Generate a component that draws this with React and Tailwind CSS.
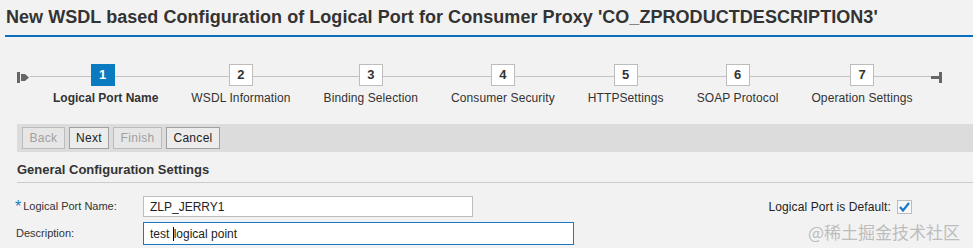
import React from 'react'

const steps = [
  { n: 1, label: 'Logical Port Name', active: true },
  { n: 2, label: 'WSDL Information' },
  { n: 3, label: 'Binding Selection' },
  { n: 4, label: 'Consumer Security' },
  { n: 5, label: 'HTTPSettings' },
  { n: 6, label: 'SOAP Protocol' },
  { n: 7, label: 'Operation Settings' },
]

function Step({ n, label, active }) {
  return (
    <div className="flex flex-col items-center">
      <div
        className={
          active
            ? 'w-[24px] h-[22px] mr-[6px] flex items-center justify-center bg-[#0a7bc1] border border-[#0a7bc1] text-white text-[13px] font-bold'
            : 'w-[24px] h-[22px] flex items-center justify-center bg-white border border-[#bdbdbd] text-[#333] text-[13px] font-bold'
        }
      >
        {n}
      </div>
      <div className={active ? 'mt-[5px] text-[12px] leading-[14px] font-bold text-[#333] whitespace-nowrap' : 'mt-[5px] text-[12px] leading-[14px] tracking-[0.1px] text-[#333] whitespace-nowrap'}>
        {label}
      </div>
    </div>
  )
}

function Btn({ children, disabled, w }) {
  return (
    <button
      className={
        (disabled
          ? 'h-[22px] border border-[#bcbcbc] bg-[#e6e6e6] text-[#a0a0a0] text-[12px] tracking-[0.3px] '
          : 'h-[22px] border border-[#a0a0a0] bg-[#ececec] text-[#222] text-[12px] tracking-[0.3px] ') + w
      }
    >
      {children}
    </button>
  )
}

export default function App() {
  return (
    <div className="relative w-[973px] h-[248px] overflow-hidden bg-[#f2f2f2] text-[#333] font-['Liberation_Sans',Arial,sans-serif]">
      {/* Title */}
      <div className="ml-[5px] h-[37px] border-b-2 border-[#0a6ebd] pl-[1px] pt-[6px]">
        <h1 className="text-[18px] leading-[22px] tracking-[0.05px] font-bold text-[#333] whitespace-nowrap">
          New WSDL based Configuration of Logical Port for Consumer Proxy 'CO_ZPRODUCTDESCRIPTION3'
        </h1>
      </div>

      {/* Roadmap */}
      <div className="relative h-[87px]">
        <div className="absolute left-[30px] right-[34px] top-[39px] h-px bg-[#c3c3c3]" />
        <svg className="absolute left-[17px] top-[35px]" width="13" height="11" viewBox="0 0 13 11">
          <rect x="0" y="0" width="3" height="11" fill="#666" />
          <path d="M4 2 H8 L12 5.5 L8 9 H4 Z" fill="#666" />
        </svg>
        <svg className="absolute left-[931px] top-[35px]" width="12" height="11" viewBox="0 0 12 11">
          <rect x="0" y="4" width="8" height="3" fill="#666" />
          <rect x="8" y="0" width="3" height="11" fill="#666" />
        </svg>
        <div className="relative flex gap-[33px] pl-[53px] pt-[27px]">
          {steps.map(s => <Step key={s.n} {...s} />)}
        </div>
      </div>

      {/* Toolbar */}
      <div className="ml-[17px] h-[28px] bg-[#dcdcdc] flex items-center gap-[4px] pl-[5px]">
        <Btn disabled w="w-[43px]">Back</Btn>
        <Btn w="w-[40px]">Next</Btn>
        <Btn disabled w="w-[49px]">Finish</Btn>
        <Btn w="w-[54px]">Cancel</Btn>
      </div>

      {/* Section */}
      <div className="ml-[17px] h-[31px] border-b border-[#cccccc] pt-[10px]">
        <h2 className="text-[13px] leading-[16px] font-bold text-[#333]">General Configuration Settings</h2>
      </div>

      {/* Form */}
      <div className="pl-[15px] pt-[13px] flex flex-col gap-[5px]">
        <div className="flex items-center">
          <div className="w-[128px] flex items-center text-[11px] text-[#333]">
            <span className="text-[#1a7ccb] text-[16px] leading-[10px] mr-[2px] mt-[1px]">*</span>
            <span>Logical Port Name:</span>
          </div>
          <div className="w-[330px] h-[21px] bg-white border border-[#bdbdbd] flex items-center pl-[6px] text-[12px] text-[#222]">
            ZLP_JERRY1
          </div>
          <div className="ml-auto mr-[61px] flex items-center gap-[6px] text-[12px] text-[#222]">
            <span className="tracking-[0.1px]">Logical Port is Default:</span>
            <span className="w-[15px] h-[14px] bg-[#f7f7f7] border border-[#bdbdbd] flex items-center justify-center">
              <svg width="11" height="10" viewBox="0 0 11 10">
                <path d="M1 5 L4 8.5 L10 1" fill="none" stroke="#1a78c8" strokeWidth="2.2" />
              </svg>
            </span>
          </div>
        </div>
        <div className="flex items-center">
          <div className="w-[128px] pl-[1px] text-[11px] text-[#333]">Description:</div>
          <div className="w-[431px] h-[23px] bg-white border border-[#1b78c2] flex items-center pl-[6px] text-[12px] text-[#222]">
            <span className="whitespace-pre">test </span>
            <span className="inline-block w-px h-[14px] bg-black" />
            <span>logical point</span>
          </div>
        </div>
      </div>

      {/* Watermark */}
      <div className="absolute left-[808px] top-[221px] text-[17px] leading-[22px] text-[#bdbdbd] font-['Noto_Sans_CJK_SC',sans-serif] whitespace-nowrap">
        @稀土掘金技术社区
      </div>
    </div>
  )
}
